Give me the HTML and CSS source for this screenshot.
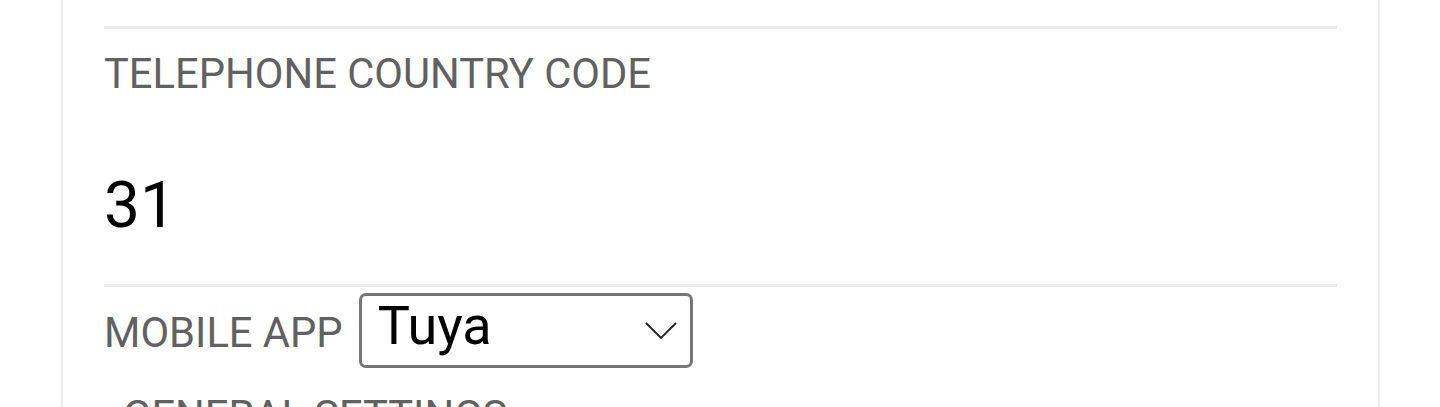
FILE: index.html
```html
<!DOCTYPE html>
<html lang="en">
<head>
    <meta charset="UTF-8">
    <meta name="viewport" content="width=device-width, initial-scale=1.0">
    <title>Settings</title>
    <link rel="stylesheet" href="styles.css">
</head>
<body>
    <div class="card">
        <div class="field">
            <div class="field-label">TELEPHONE COUNTRY CODE</div>
            <div class="field-value">31</div>
        </div>

        <div class="field-row">
            <span class="row-label">MOBILE APP</span>
            <div class="select">
                <span class="select-value">Tuya</span>
                <svg class="chevron" width="32" height="17" viewBox="0 0 32 17">
                    <path d="M1 1 L16 16 L31 1" fill="none" stroke="#222" stroke-width="1.8"/>
                </svg>
            </div>
        </div>

        <h2 class="section-title">GENERAL SETTINGS</h2>
    </div>
</body>
</html>
```

FILE: styles.css
```css
:root {
    --line-color: #ebebeb;
    --label-color: #616161;
    --text-color: #000000;
}

body {
    margin: 0;
    font-family: Roboto, "Noto Sans", sans-serif;
    background: #ffffff;
    color: var(--text-color);
}

.card {
    margin: 0 60px 0 61px;
    padding: 26px 41px 40px;
    border-left: 2px solid var(--line-color);
    border-right: 2px solid var(--line-color);
    min-height: 600px;
}

.field {
    border-top: 3px solid var(--line-color);
    border-bottom: 3px solid var(--line-color);
    padding-bottom: 40px;
}

.field-label {
    margin-top: 21px;
    font-size: 41.7px;
    line-height: 47px;
    color: var(--label-color);
}

.field-value {
    margin-top: 70px;
    font-size: 64px;
    line-height: 77px;
}

.field-row {
    display: flex;
    align-items: center;
    gap: 16px;
    margin-top: 6px;
}

.row-label {
    font-size: 41.7px;
    line-height: 47px;
    color: var(--label-color);
    margin-top: 4px;
}

.select {
    box-sizing: border-box;
    width: 334px;
    height: 75px;
    display: flex;
    align-items: center;
    justify-content: space-between;
    padding: 0 13px 0 16px;
    border: 3px solid #767676;
    border-radius: 7px;
}

.select-value {
    align-self: flex-start;
    margin-top: -2px;
    font-size: 54px;
}

.chevron {
    display: block;
}

.section-title {
    margin: 24px 0 0;
    padding-left: 19px;
    font-size: 41.7px;
    line-height: 47px;
    font-weight: 400;
    color: var(--label-color);
}
```
